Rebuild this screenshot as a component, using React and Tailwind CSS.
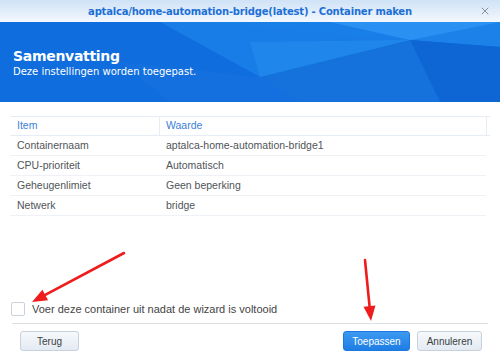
import { X } from 'lucide-react';

const rows = [
  { item: 'Containernaam', value: 'aptalca-home-automation-bridge1' },
  { item: 'CPU-prioriteit', value: 'Automatisch' },
  { item: 'Geheugenlimiet', value: 'Geen beperking' },
  { item: 'Netwerk', value: 'bridge' },
];

const HeaderFacets = () => (
  <svg className="absolute inset-0 h-full w-full" viewBox="0 0 500 80" preserveAspectRatio="none" aria-hidden="true">
    <polygon points="200,0 500,0 500,25 410,18" fill="#1c82ea" />
    <polygon points="160,0 330,0 410,18 260,55" fill="#1a7ee8" opacity="0.9" />
    <polygon points="410,18 500,25 500,80 440,80" fill="#0e66d4" />
    <polygon points="260,55 410,18 440,80 300,80" fill="#1572dc" />
    <polygon points="120,40 260,55 300,80 170,80" fill="#1470de" />
    <polygon points="330,0 500,0 410,18" fill="#2a91f2" />
    <polygon points="250,20 410,18 260,55" fill="#2289ee" opacity="0.8" />
  </svg>
);

const Arrow = ({ x1, y1, x2, y2 }) => {
  const dx = x2 - x1;
  const dy = y2 - y1;
  const len = Math.hypot(dx, dy);
  const ux = dx / len;
  const uy = dy / len;
  const bx = x2 - ux * 15;
  const by = y2 - uy * 15;
  const px = -uy * 6;
  const py = ux * 6;
  return (
    <g>
      <line x1={x1} y1={y1} x2={bx} y2={by} stroke="#ee1c1c" strokeWidth="2.6" strokeLinecap="round" />
      <polygon points={`${x2},${y2} ${bx + px},${by + py} ${bx - px},${by - py}`} fill="#ee1c1c" />
    </g>
  );
};

export default function App() {
  return (
    <div className="relative flex h-[356px] w-[500px] flex-col overflow-hidden bg-white font-['Liberation_Sans',Arial,sans-serif]">
      <div className="relative flex h-[22px] shrink-0 items-center justify-center bg-gradient-to-b from-[#cfe2f6] to-[#f3f8fd]">
        <span className="font-['DejaVu_Sans',Verdana,sans-serif] text-[10px] font-bold tracking-[-0.2px] text-[#1d6fd6]">
          aptalca/home-automation-bridge(latest) - Container maken
        </span>
        <X className="absolute right-[9px] top-[5px] h-[12px] w-[12px] text-[#8a8f96]" strokeWidth={2} />
      </div>

      <div className="relative h-[80px] shrink-0 overflow-hidden bg-[#0f6ddd]">
        <HeaderFacets />
        <div className="relative px-[13px] pt-[25px] font-['DejaVu_Sans',Verdana,sans-serif] text-white">
          <div className="text-[14px] font-bold leading-[18px] tracking-[-0.3px]">Samenvatting</div>
          <div className="text-[10px] leading-[14px]">Deze instellingen worden toegepast.</div>
        </div>
      </div>

      <div className="mx-[10px] mt-[14px] text-[10.5px]">
        <div className="flex h-[20px] border-y border-[#e6edf5]">
          <div className="flex w-[150px] items-center border-r border-[#e6edf5] pl-[7px] text-[#3b7fd8]">Item</div>
          <div className="flex flex-1 items-center pl-[6px] text-[#3b7fd8]">Waarde</div>
          <div className="w-[4px] border-l border-[#e6edf5]" />
        </div>
        {rows.map((row) => (
          <div className="mr-[4px] flex h-[20px] items-center border-b border-[#eef2f7] text-[#505559]" key={row.item}>
            <div className="w-[150px] pl-[7px]">{row.item}</div>
            <div className="flex-1 pl-[6px]">{row.value}</div>
          </div>
        ))}
      </div>

      <div className="flex-1" />

      <div className="mx-[11px] flex items-center gap-[7px] pb-[6px]">
        <div className="h-[14px] w-[14px] rounded-[2px] border border-[#c9d1da] bg-white" />
        <span className="text-[11px] text-[#444]">Voer deze container uit nadat de wizard is voltooid</span>
      </div>
      <div className="mx-[12px] border-t border-[#dcdfe3]" />
      <div className="flex items-center px-[20px] pb-[5px] pt-[7px]">
        <button className="h-[20px] w-[59px] rounded-[3px] border border-[#c7d0db] bg-gradient-to-b from-[#f6f9fc] to-[#e4eaf2] text-[10px] text-[#3a3f45]" type="button">
          Terug
        </button>
        <div className="flex-1" />
        <button className="mr-[7px] h-[20px] w-[67px] rounded-[3px] border border-[#1b78e0] bg-gradient-to-b from-[#3c9af2] to-[#1d7de3] text-[10px] text-white" type="button">
          Toepassen
        </button>
        <button className="mr-[-2px] h-[20px] w-[65px] rounded-[3px] border border-[#c7d0db] bg-gradient-to-b from-[#f6f9fc] to-[#e4eaf2] text-[10px] text-[#3a3f45]" type="button">
          Annuleren
        </button>
      </div>

      <svg className="pointer-events-none absolute inset-0 h-[356px] w-[500px]" viewBox="0 0 500 356" aria-hidden="true">
        <Arrow x1={124} y1={253} x2={32} y2={302} />
        <Arrow x1={365} y1={260} x2={371} y2={321} />
      </svg>
    </div>
  );
}
